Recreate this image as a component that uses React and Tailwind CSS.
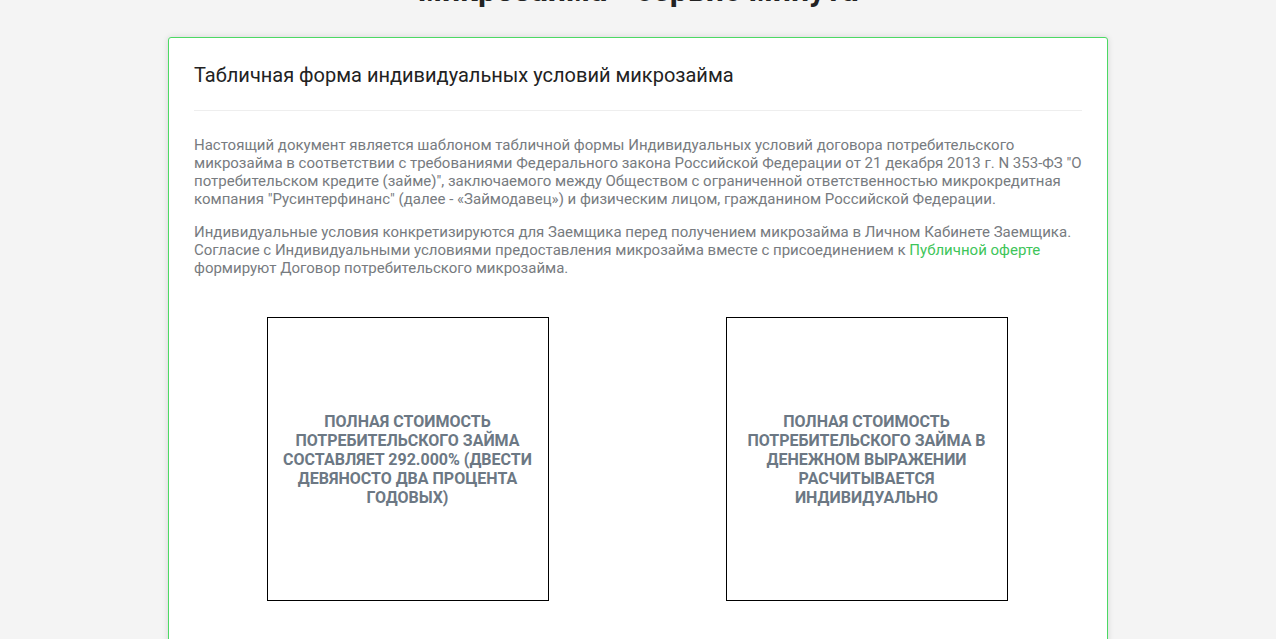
import React from "react";

const boxes = [
  "Полная стоимость потребительского займа составляет 292.000% (двести девяносто два процента годовых)",
  "Полная стоимость потребительского займа в денежном выражении расчитывается индивидуально",
];

const App = () => {
  return (
    <div className="min-h-screen bg-[#f4f4f4] font-['Roboto',sans-serif] overflow-hidden">
      <h1 className="text-center text-[32px] leading-[38px] font-bold text-[#222] -mt-[29px] mb-[28px]">
        микрозайма - сервис минута
      </h1>

      <div className="mx-auto w-[940px] bg-white border border-[#4cd964] rounded-[3px] shadow-[0_0_6px_rgba(0,0,0,0.12)] px-[25px] pt-[25px] pb-[60px]">
        <h2 className="text-[20px] leading-[24px] text-[#222] pb-[23px] border-b border-[#eeeeee]">
          Табличная форма индивидуальных условий микрозайма
        </h2>

        <div className="pt-[25px] text-[15px] leading-[18px] text-[#777b80]">
          <p className="mb-[15px]">
            Настоящий документ является шаблоном табличной формы Индивидуальных условий договора
            потребительского
            <br />
            микрозайма в соответствии с требованиями Федерального закона Российской Федерации от 21
            декабря 2013 г. N 353-ФЗ "О
            <br />
            потребительском кредите (займе)", заключаемого между Обществом с ограниченной
            ответственностью микрокредитная
            <br />
            компания "Русинтерфинанс" (далее - «Займодавец») и физическим лицом, гражданином
            Российской Федерации.
          </p>
          <p>
            Индивидуальные условия конкретизируются для Заемщика перед получением микрозайма в Личном
            Кабинете Заемщика.
            <br />
            Согласие с Индивидуальными условиями предоставления микрозайма вместе с присоединением к{" "}
            <a href="#" className="text-[#3ec55a]">
              Публичной оферте
            </a>
            <br />
            формируют Договор потребительского микрозайма.
          </p>
        </div>

        <div className="flex -ml-[16px] -mr-[14px] mt-[40px]">
          {boxes.map((text) => (
            <div key={text} className="w-1/2 flex justify-center">
              <div className="w-[282px] h-[284px] border border-black flex items-center justify-center px-[14px]">
                <p className="text-center uppercase font-bold text-[16px] leading-[19px] text-[#6c7884]">
                  {text}
                </p>
              </div>
            </div>
          ))}
        </div>
      </div>
    </div>
  );
};

export default App;
